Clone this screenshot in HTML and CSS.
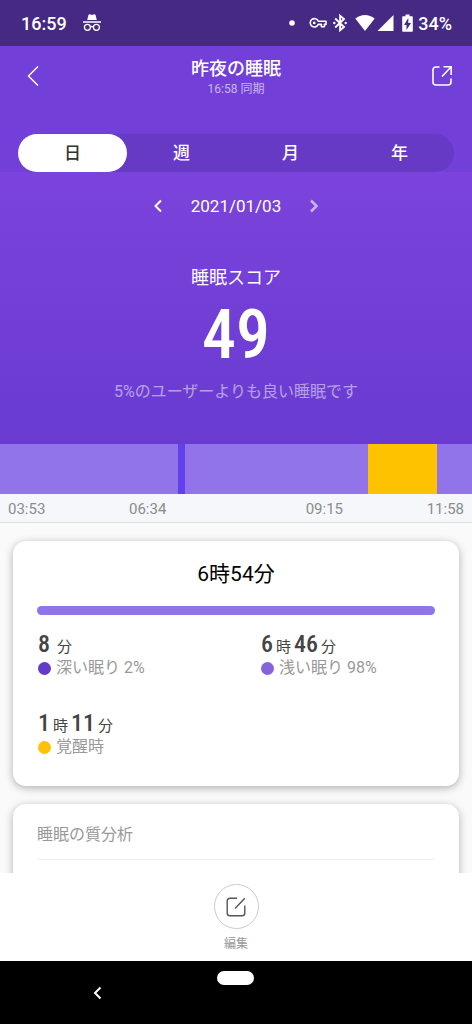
FILE: index.html
```html
<!DOCTYPE html>
<html lang="ja">
<head>
<meta charset="utf-8">
<meta name="viewport" content="width=device-width, initial-scale=1">
<title>昨夜の睡眠</title>
<link rel="stylesheet" href="styles.css">
</head>
<body>
<div class="status-bar">
  <span class="clock">16:59</span>
  <svg class="incognito" width="20" height="20" viewBox="0 0 20 20" aria-hidden="true">
    <path fill="#fff" d="M5.2 7 6.5 1.7 8 1.2 10 2l2-.8 1.5.5L14.8 7zM1 8.2h18v1.6H1z"/>
    <g fill="none" stroke="#fff" stroke-width="1.3"><circle cx="5.4" cy="14.3" r="3"/><circle cx="14.4" cy="14.3" r="3"/><path d="M8.4 14c1-.7 2-.7 3 0"/></g>
  </svg>
  <div class="status-icons">
    <svg width="6" height="20" viewBox="0 0 6 20" aria-hidden="true"><circle cx="3" cy="10" r="2.8" fill="#fff"/></svg>
    <svg class="key" width="18" height="20" viewBox="0 0 18 20" aria-hidden="true">
      <path fill="none" stroke="#fff" stroke-width="1.6" stroke-linejoin="round" d="M9.3 8.2H17v3.2h-1.600v2.300h-3v-2.300H9.300A4.200 4.200 0 1 1 9.300 8.200z"/><circle cx="5.200" cy="9.900" r="1.400" fill="#fff"/>
    </svg>
    <svg width="14" height="20" viewBox="0 0 14 20" aria-hidden="true">
      <path fill="none" stroke="#fff" stroke-width="1.900" d="M2.200 5.500 11 14 7.100 17.300V2.700L11 6l-8.800 8.500"/><circle cx="1.300" cy="10" r="1.200" fill="#fff"/><circle cx="12.700" cy="10" r="1.200" fill="#fff"/>
    </svg>
    <svg class="wifi" width="20" height="20" viewBox="0 0 20 20" aria-hidden="true"><path fill="#fff" d="M.3 5.500C6 .8 14 .8 19.700 5.500L10 18z"/></svg>
    <svg width="17" height="20" viewBox="0 0 17 20" aria-hidden="true"><path fill="#fff" d="M16.500 2v16H.500z"/></svg>
    <svg class="battery" width="11" height="20" viewBox="0 0 11 20" aria-hidden="true"><path fill="#fff" d="M3.500 1.500h4v1.700H10q.8 0 .8.800v14q0 .8-.8.800H1q-.8 0-.8-.8V4q0-.8.800-.8h2.500z"/><path fill="#452983" d="M6.300 5 2 12h2.500v5L9 10H6.300z"/></svg>
    <span class="charge">34%</span>
  </div>
</div>

<main class="screen">
  <section class="top">
    <header class="header">
      <button class="icon-button" aria-label="戻る">
        <svg width="24" height="24" viewBox="0 0 24 24"><path fill="none" stroke="#fff" stroke-width="1.400" d="M20 2.500 10.500 12l9.500 9.500"/></svg>
      </button>
      <div class="heading">
        <h1>昨夜の睡眠</h1>
        <p>16:58 同期</p>
      </div>
      <button class="icon-button" aria-label="共有">
        <svg width="24" height="24" viewBox="0 0 24 24"><path fill="none" stroke="#fff" stroke-width="1.600" d="M9.500 3H6Q3 3 3 6v12q0 3 3 3h12q3 0 3-3v-3.500M12 12.500 21 3M13.500 2.800H21.200V11"/></svg>
      </button>
    </header>
    <div class="tabs" role="tablist">
      <button class="tab active" role="tab" aria-selected="true">日</button>
      <button class="tab" role="tab" aria-selected="false">週</button>
      <button class="tab" role="tab" aria-selected="false">月</button>
      <button class="tab" role="tab" aria-selected="false">年</button>
    </div>
  </section>

  <section class="score">
    <div class="date">
      <button class="arrow" aria-label="前の日"><svg width="12" height="16" viewBox="0 0 12 16"><path fill="none" stroke="#fff" stroke-width="2" d="M9 2.500 3.500 8 9 13.500"/></svg></button>
      <span>2021/01/03</span>
      <button class="arrow next" aria-label="次の日"><svg width="12" height="16" viewBox="0 0 12 16"><path fill="none" stroke="#fff" stroke-width="2.500" d="M3 2.500 8.500 8 3 13.500"/></svg></button>
    </div>
    <h2>睡眠スコア</h2>
    <strong class="points">49</strong>
    <p class="compare">5%のユーザーよりも良い睡眠です</p>
  </section>

  <div class="timeline">
    <span class="light" style="flex-grow:178"></span>
    <span class="deep" style="flex-grow:7"></span>
    <span class="light" style="flex-grow:183"></span>
    <span class="awake" style="flex-grow:69"></span>
    <span class="light" style="flex-grow:35"></span>
  </div>
  <div class="axis"><span>03:53</span><span class="inner">06:34</span><span class="inner end">09:15</span><span class="end">11:58</span></div>

  <div class="cards">
    <section class="card">
      <h2 class="total">6時54分</h2>
      <div class="bar"></div>
      <div class="stats">
        <div class="stat">
          <p class="duration spaced"><b>8</b><span>分</span></p>
          <p class="label"><i class="dot deep-dot"></i>深い眠り 2%</p>
        </div>
        <div class="stat">
          <p class="duration"><b>6</b><span>時</span><b>46</b><span>分</span></p>
          <p class="label"><i class="dot light-dot"></i>浅い眠り 98%</p>
        </div>
        <div class="stat">
          <p class="duration"><b>1</b><span>時</span><b>11</b><span>分</span></p>
          <p class="label"><i class="dot awake-dot"></i>覚醒時</p>
        </div>
      </div>
    </section>
    <section class="card analysis">
      <h2>睡眠の質分析</h2>
    </section>
  </div>
</main>

<footer class="edit-bar">
  <button class="edit">
    <span class="circle"><svg width="20" height="20" viewBox="0 0 20 20" aria-hidden="true"><path fill="none" stroke="#555" stroke-width="1.400" d="M11 1.200H4Q1.200 1.200 1.200 4v12q0 2.800 2.800 2.800h12q2.800 0 2.800-2.800V8.500M9 11.500 18.800 1.200"/></svg></span>
    編集
  </button>
</footer>
<nav class="system-nav">
  <button class="nav-back" aria-label="戻る"><svg width="10" height="14" viewBox="0 0 10 14"><path fill="none" stroke="#fff" stroke-width="2" d="M8.500 1.500 3 7l5.500 5.500"/></svg></button>
  <button class="home" aria-label="ホーム"></button>
</nav>
</body>
</html>
```
FILE: styles.css
```css
* { box-sizing: border-box; }
body {
  margin: 0;
  height: 100vh;
  display: flex;
  flex-direction: column;
  background: #fafafa;
  font-family: Roboto, "Noto Sans CJK JP", sans-serif;
  color: #444;
}
h1, h2, p { margin: 0; font-weight: 400; }
button {
  border: 0;
  padding: 0;
  background: none;
  font: inherit;
  color: inherit;
}
svg { display: block; }

.status-bar {
  flex: none;
  display: flex;
  align-items: center;
  height: 46px;
  padding: 0 20px 0 21px;
  background: #452983;
  color: #fff;
  font-size: 18px;
  font-weight: 500;
}
.incognito { margin-left: 15px; }
.status-icons { display: flex; align-items: center; margin-left: auto; }
.key { margin: 0 6px 0 14px; }
.wifi { margin: 0 2px 0 8px; }
.battery { margin: 0 5px 0 8px; }

.screen { flex: 1; min-height: 0; overflow: hidden; }
.top {
  padding: 8px 18px 0;
  background: #7240d8;
  color: #fff;
}
.header {
  display: flex;
  justify-content: space-between;
  padding: 0 0 36px;
}
.icon-button { width: 24px; height: 44px; }
.heading { text-align: center; }
.heading h1 { font-size: 18px; line-height: 29px; font-weight: 500; }
.heading p { font-size: 12px; line-height: 12px; opacity: 0.6; }
.tabs {
  display: grid;
  grid-template-columns: repeat(4, 1fr);
  border-radius: 19px;
  background: #673ac6;
}
.tab {
  height: 38px;
  border-radius: 19px;
  font-size: 17px;
  line-height: 24px;
  font-weight: 500;
}
.tab.active { background: #fff; color: #333; }

.score {
  display: flex;
  flex-direction: column;
  align-items: center;
  padding: 20px 16px 39px;
  background: linear-gradient(#7b43dc, #693bd0);
  color: #fff;
}
.date {
  display: flex;
  align-items: center;
  gap: 27px;
  font-size: 17px;
  line-height: 28px;
}
.next { opacity: 0.6; }
.score h2 { margin-top: 44px; font-size: 18px; line-height: 28px; }
.points {
  font-family: "Roboto Condensed", Roboto, sans-serif;
  font-size: 68px;
  line-height: 87px;
  font-weight: 500;
}
.compare { font-size: 16px; line-height: 26px; opacity: 0.5; }

.timeline { display: flex; height: 50px; }
.light { background: #9173ea; }
.deep { background: #6340ee; }
.awake { background: #ffc200; }
.axis {
  display: grid;
  grid-template-columns: repeat(4, 1fr);
  height: 29px;
  border-bottom: 1px solid #dfe1e5;
  background: #f5f7fa;
  color: #8c8c8c;
  font-size: 15px;
  line-height: 30px;
}
.axis span { padding: 0 8px; }
.axis .inner { padding: 0 11px; }
.axis .end { text-align: right; }

.cards { display: grid; gap: 18px; padding: 18px 13px; }
.card {
  padding: 18px 24px 29px;
  border-radius: 13px;
  background: #fff;
  box-shadow: 0 2px 8px rgba(0, 0, 0, 0.3);
}
.total {
  text-align: center;
  color: #000;
  font-size: 21px;
  line-height: 30px;
}
.bar {
  height: 9px;
  margin: 17px 0;
  border-radius: 5px;
  background: #9173ea;
}
.stats { display: grid; grid-template-columns: 1fr 1fr; gap: 33px 48px; }
.stat { padding-left: 1px; }
.duration {
  display: flex;
  align-items: baseline;
  gap: 3px;
  height: 26px;
  font-size: 15px;
  line-height: 24px;
}
.duration.spaced { gap: 7px; }
.duration b {
  font-family: "Roboto Condensed", Roboto, sans-serif;
  font-size: 24px;
  font-weight: 500;
}
.label {
  display: flex;
  align-items: center;
  gap: 5px;
  color: #999;
  font-size: 16px;
  line-height: 20px;
}
.dot { width: 13px; height: 13px; border-radius: 50%; }
.deep-dot { background: #623bcb; }
.light-dot { background: #8563da; }
.awake-dot { background: #ffc107; }
.analysis h2 {
  padding-bottom: 11px;
  border-bottom: 1px solid #eee;
  color: #999;
  font-size: 16px;
  line-height: 26px;
}

.edit-bar {
  flex: none;
  display: flex;
  justify-content: center;
  padding: 11px 0 8px;
  background: #fff;
}
.edit {
  display: flex;
  flex-direction: column;
  align-items: center;
  gap: 6px;
  color: #999;
  font-size: 12px;
  line-height: 18px;
}
.circle {
  display: grid;
  place-items: center;
  width: 45px;
  height: 45px;
  border: 1px solid #ccc;
  border-radius: 50%;
}
.system-nav {
  flex: none;
  display: grid;
  grid-template-columns: 7fr 3fr 7fr;
  justify-items: center;
  height: 63px;
  background: #000;
}
.nav-back { height: 63px; }
.home {
  width: 37px;
  height: 14px;
  margin-top: 10px;
  border-radius: 7px;
  background: #fff;
}
```
